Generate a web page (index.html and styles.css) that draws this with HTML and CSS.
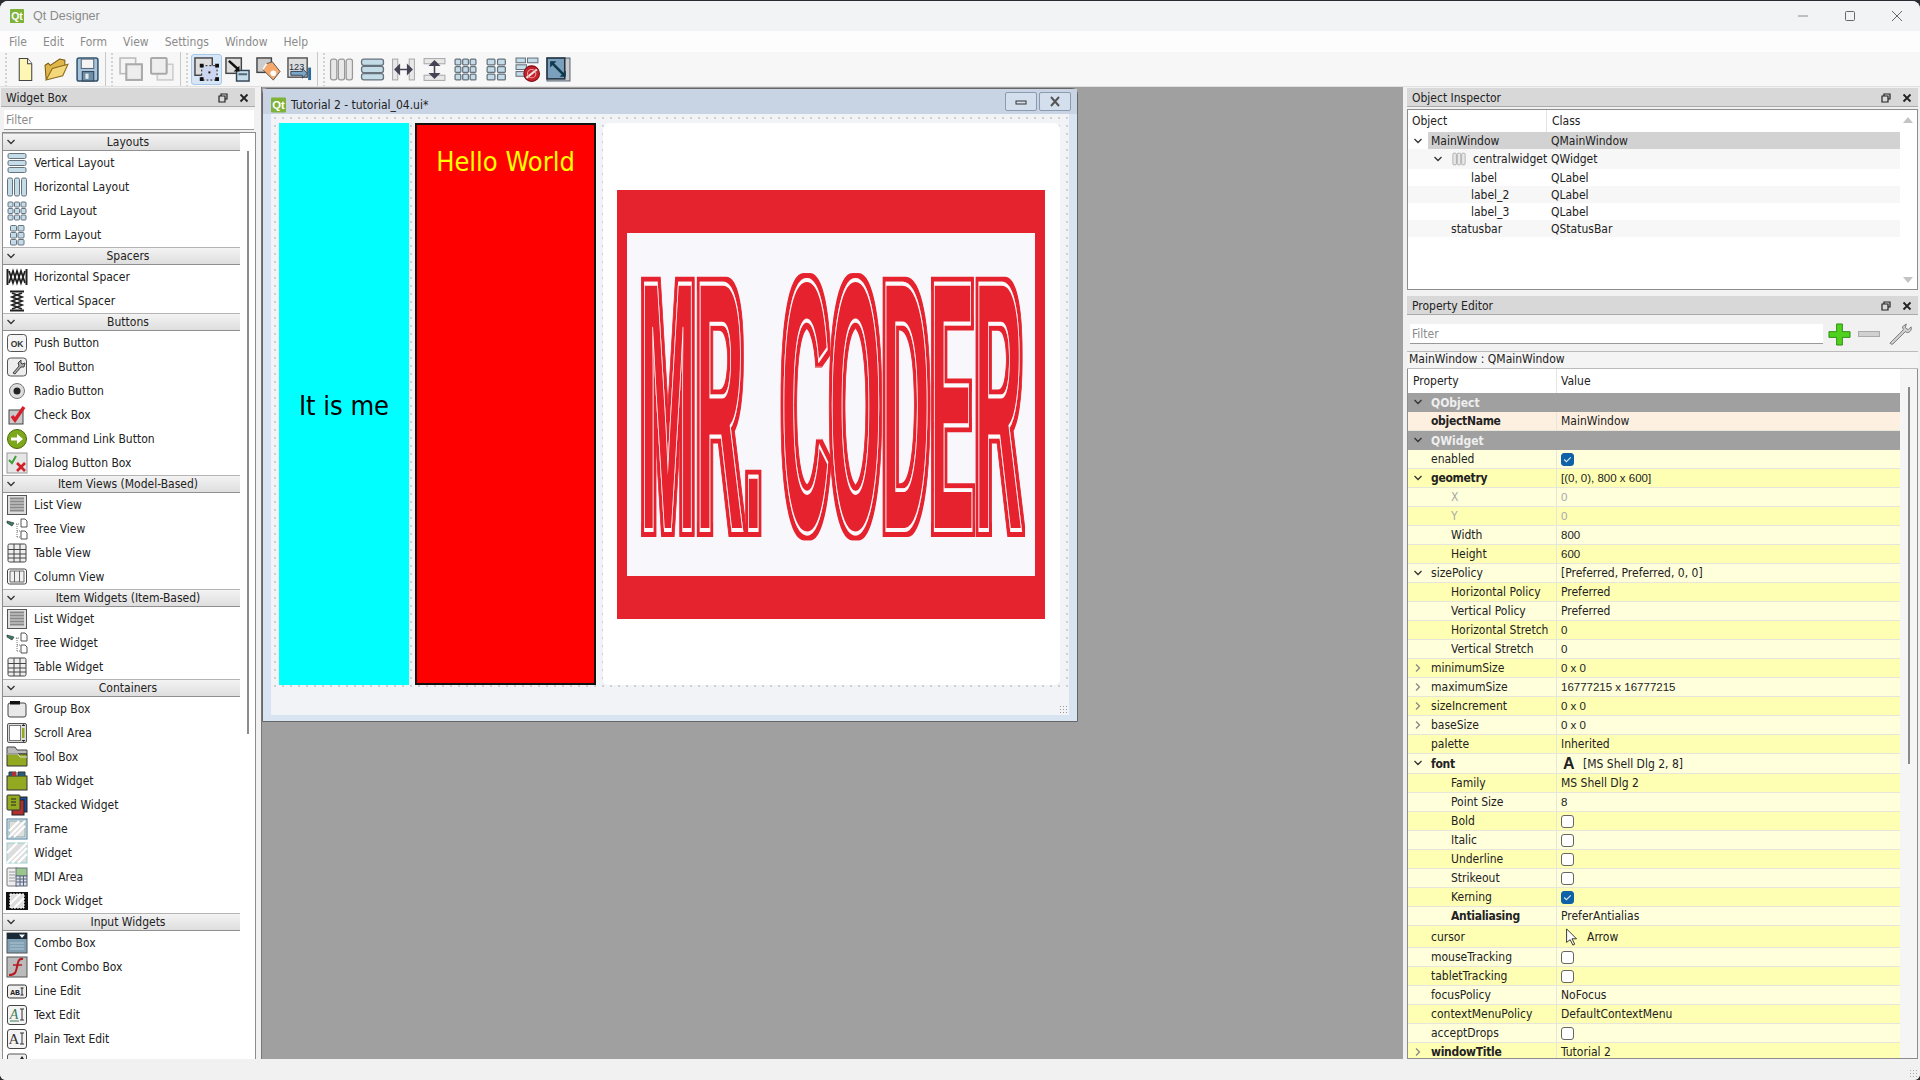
FILE: index.html
```html
<!DOCTYPE html>
<html lang="en">
<head>
  <meta charset="UTF-8" />
  <title>Qt Designer</title>
  <link rel="stylesheet" href="styles.css">
</head>
<body>
  <!-- icon sprite -->
  <svg class="sprite" xmlns="http://www.w3.org/2000/svg">
    <symbol id="i-qt" viewBox="0 0 16 16"><rect width="16" height="16" rx="1" fill="#7fb239"/><text x="8" y="12.5" font-size="12" font-weight="700" text-anchor="middle" fill="#fff" font-family="Liberation Sans">Qt</text></symbol>
    <symbol id="i-vlayout" viewBox="0 0 22 22"><g fill="#c4dbe8" stroke="#66727c"><rect x="2" y="1.5" width="18" height="5" rx="1.5"/><rect x="2" y="8.5" width="18" height="5" rx="1.5"/><rect x="2" y="15.5" width="18" height="5" rx="1.5"/></g></symbol>
    <symbol id="i-hlayout" viewBox="0 0 22 22"><g fill="#c4dbe8" stroke="#66727c"><rect x="1.5" y="2" width="5" height="18" rx="1.5"/><rect x="8.5" y="2" width="5" height="18" rx="1.5"/><rect x="15.5" y="2" width="5" height="18" rx="1.5"/></g></symbol>
    <symbol id="i-grid" viewBox="0 0 22 22"><g fill="#c4dbe8" stroke="#66727c"><rect x="2" y="2" width="5" height="5" rx="1"/><rect x="8.5" y="2" width="5" height="5" rx="1"/><rect x="15" y="2" width="5" height="5" rx="1"/><rect x="2" y="8.5" width="5" height="5" rx="1"/><rect x="8.5" y="8.5" width="5" height="5" rx="1"/><rect x="15" y="8.5" width="5" height="5" rx="1"/><rect x="2" y="15" width="5" height="5" rx="1"/><rect x="8.5" y="15" width="5" height="5" rx="1"/><rect x="15" y="15" width="5" height="5" rx="1"/></g></symbol>
    <symbol id="i-form" viewBox="0 0 22 22"><g fill="#c4dbe8" stroke="#66727c"><rect x="4.5" y="1.5" width="6" height="5.5" rx="1"/><rect x="12" y="1.5" width="6" height="5.5" rx="1"/><rect x="4.5" y="8.5" width="6" height="5.5" rx="1"/><rect x="12" y="8.5" width="6" height="5.5" rx="1"/><rect x="4.5" y="15.5" width="6" height="5.5" rx="1"/><rect x="12" y="15.5" width="6" height="5.5" rx="1"/></g></symbol>
    <symbol id="i-hspacer" viewBox="0 0 22 22"><path d="M1.5 3v16M20.5 3v16" stroke="#222" stroke-width="2"/><path d="M3 5l4 12 4-12 4 12 4-12M3 17l4-12 4 12 4-12 4 12" fill="none" stroke="#222" stroke-width="1.8"/></symbol>
    <symbol id="i-vspacer" viewBox="0 0 22 22"><path d="M4 1.5h14M4 20.5h14" stroke="#222" stroke-width="2"/><path d="M6 3l10 4-10 4 10 4-10 4M16 3L6 7l10 4-10 4 10 4" fill="none" stroke="#222" stroke-width="1.8"/></symbol>
    <symbol id="i-push" viewBox="0 0 22 22"><rect x="1.5" y="2.5" width="19" height="17" rx="3" fill="#f4f4f4" stroke="#555"/><text x="11" y="14.5" font-size="8.5" font-weight="700" text-anchor="middle" fill="#333" font-family="Liberation Sans">OK</text></symbol>
    <symbol id="i-tool" viewBox="0 0 22 22"><rect x="1.5" y="2" width="19" height="18" rx="3" fill="#eee" stroke="#555"/><path d="M15 4l-3 3 1 3-6 7 2 1 6-7 3 0 1-4-3 1-1-1z" fill="#aaa" stroke="#444"/></symbol>
    <symbol id="i-radio" viewBox="0 0 22 22"><circle cx="11" cy="11" r="7.5" fill="#ddd" stroke="#777"/><circle cx="11" cy="11" r="3.5" fill="#222"/></symbol>
    <symbol id="i-check" viewBox="0 0 22 22"><rect x="3" y="6" width="14" height="14" fill="#c9c9c9" stroke="#444"/><path d="M6 12l3 4 9-13" fill="none" stroke="#d81e2b" stroke-width="3.4"/></symbol>
    <symbol id="i-cmd" viewBox="0 0 22 22"><circle cx="11" cy="11" r="9.5" fill="#7da81c" stroke="#4c6a0c"/><path d="M5 9.5h6V6l6 5-6 5v-3.5H5z" fill="#fff"/></symbol>
    <symbol id="i-dialog" viewBox="0 0 22 22"><rect x="1" y="1" width="20" height="20" fill="#e6e6e6" stroke="#999"/><path d="M3 8l3 3 4-7" fill="none" stroke="#3f9f3a" stroke-width="2"/><path d="M11 11l8 8M19 11l-8 8" stroke="#d0202a" stroke-width="2.6"/></symbol>
    <symbol id="i-list" viewBox="0 0 22 22"><rect x="1.5" y="1.5" width="19" height="19" fill="#ddd" stroke="#555"/><path d="M4 4.5h14M4 7.500h14M4 10.500h14M4 13.500h14M4 16.500h14" stroke="#888" stroke-width="1.8"/></symbol>
    <symbol id="i-tree" viewBox="0 0 22 22"><path d="M1 3l7 2-2 3-5-3z" fill="#3a7f6a" stroke="#222" stroke-width=".6"/><path d="M10 6h3M11 6v13M11 13h3M11 19h3" stroke="#777" stroke-dasharray="1 1" fill="none"/><path d="M15 1h4l2 2v6h-6zM15 13h4l2 2v6h-6z" fill="#fff" stroke="#555"/></symbol>
    <symbol id="i-table" viewBox="0 0 22 22"><rect x="2" y="2" width="18" height="18" rx="1.500" fill="#eee" stroke="#444"/><path d="M2 7.500h18M2 12h18M2 16h18M8 2v18M14 2v18" stroke="#444"/></symbol>
    <symbol id="i-column" viewBox="0 0 22 22"><rect x="1.500" y="3" width="19" height="15" rx="2" fill="#fff" stroke="#444"/><path d="M4 5h14v11H4zM8.500 5v11M13.500 5v11" fill="#f0f0f0" stroke="#666"/></symbol>
    <symbol id="i-group" viewBox="0 0 22 22"><rect x="2" y="5" width="18" height="14" rx="2" fill="#e8e8e8" stroke="#444"/><rect x="4" y="3" width="10" height="3.500" fill="#111"/></symbol>
    <symbol id="i-scroll" viewBox="0 0 22 22"><rect x="1.500" y="1.500" width="19" height="19" rx="1.500" fill="#ddd" stroke="#555"/><rect x="3.500" y="3.500" width="11" height="15" fill="#fff" stroke="#777"/><rect x="16" y="6" width="2.500" height="10" fill="#93a922"/><path d="M15.500 4h4l-2-2zM15.500 18h4l-2 2z" fill="#222"/></symbol>
    <symbol id="i-toolbox" viewBox="0 0 22 22"><path d="M1 1h8l2 3h10v4H1z" fill="#bbb" stroke="#444"/><path d="M1 8h20v12H1z" fill="#93a922" stroke="#333"/><path d="M1 8h11l2 3h7" fill="none" stroke="#ddd"/></symbol>
    <symbol id="i-tab" viewBox="0 0 22 22"><rect x="1" y="6" width="20" height="14" fill="#93a922" stroke="#333"/><path d="M3 6V2h7v4M12 6V2h7v4" fill="#2a5b7a" stroke="#333"/><path d="M6 2h4v4H6z" fill="#b03030"/></symbol>
    <symbol id="i-stacked" viewBox="0 0 22 22"><rect x="10" y="3" width="11" height="15" fill="#1c4c9c" stroke="#222"/><rect x="6" y="6" width="12" height="15" fill="#b03030" stroke="#222"/><rect x="1" y="1" width="13" height="15" rx="1" fill="#93a922" stroke="#333"/><path d="M5 5h5M5 8h5M5 11h5" stroke="#222"/></symbol>
    <symbol id="i-frame" viewBox="0 0 22 22"><rect x="1" y="1" width="20" height="20" fill="#e8eef2" stroke="#4a7a9c"/><rect x="3" y="3" width="16" height="16" fill="#ddd" stroke="#8aa"/><path d="M3 13l10-10M8 19L19 8M3 19L19 3" stroke="#fff" stroke-width="2"/></symbol>
    <symbol id="i-widget" viewBox="0 0 22 22"><rect x="1" y="1" width="20" height="20" fill="#ddd" stroke="#9cc"/><path d="M1 11L11 1M6 21L21 6M12 21l9-9M1 21L21 1" stroke="#fff" stroke-width="2.200"/></symbol>
    <symbol id="i-mdi" viewBox="0 0 22 22"><rect x="1" y="2" width="11" height="18" rx="1" fill="#eee" stroke="#777"/><path d="M3 6h6M3 9h6M3 12h6M3 15h6" stroke="#999"/><rect x="10" y="2" width="11" height="8" fill="#9cc58c" stroke="#678"/><rect x="10" y="10" width="11" height="10" fill="#dde" stroke="#567"/><path d="M10 13h11M10 16h11M14 10v10M17.500 10v10" stroke="#567"/></symbol>
    <symbol id="i-dock" viewBox="0 0 22 22"><rect x="0" y="2" width="22" height="18" fill="#111"/><rect x="4" y="4" width="14" height="14" fill="#ddd" stroke="#fff" stroke-dasharray="2 1"/><path d="M4 14L14 4M8 18L18 8" stroke="#fff" stroke-width="1.800"/></symbol>
    <symbol id="i-combo" viewBox="0 0 22 22"><rect x="1" y="1" width="20" height="20" fill="#7f9fb5" stroke="#555"/><rect x="1" y="1" width="20" height="6" fill="#1a2a36"/><path d="M13 2.500h6l-3 3.500z" fill="#fff"/><path d="M4 11h14M4 14h14M4 17h14" stroke="#b6c6d0"/></symbol>
    <symbol id="i-fontcombo" viewBox="0 0 22 22"><rect x="1" y="1" width="20" height="20" fill="#bbb" stroke="#555"/><path d="M17 3c-5-1-5 4-6 8s-1 8-8 8" fill="none" stroke="#b81820" stroke-width="2"/><path d="M7 9h9" stroke="#b81820" stroke-width="1.500"/></symbol>
    <symbol id="i-line" viewBox="0 0 22 22"><rect x="1.500" y="5" width="19" height="13" rx="2" fill="#eee" stroke="#333"/><text x="9" y="14.500" font-size="8" font-weight="700" text-anchor="middle" fill="#222" font-family="Liberation Mono">AB</text><path d="M16 8v7M14.500 8h3M14.500 15h3" stroke="#222"/></symbol>
    <symbol id="i-text" viewBox="0 0 22 22"><rect x="1.500" y="1.500" width="19" height="19" rx="2.500" fill="#f3f3f3" stroke="#444"/><text x="8" y="15" font-size="14" font-style="italic" text-anchor="middle" fill="#3d7a5a" font-family="Liberation Serif">A</text><path d="M16 5v11M14 5h4M14 16h4" stroke="#333"/><path d="M4 17h9" stroke="#3d7a5a"/></symbol>
    <symbol id="i-plain" viewBox="0 0 22 22"><rect x="1.500" y="1.500" width="19" height="19" rx="2.500" fill="#f3f3f3" stroke="#444"/><text x="8" y="16" font-size="15" text-anchor="middle" fill="#333" font-family="Liberation Serif">A</text><path d="M16 5v11M14 5h4M14 16h4" stroke="#333"/></symbol>
    <symbol id="i-spin" viewBox="0 0 22 22"><rect x="1.500" y="2" width="19" height="18" rx="2" fill="#eee" stroke="#555"/><path d="M14 7h4l-2-3z" fill="#222"/></symbol>

    <symbol id="t-new" viewBox="0 0 24 24"><path d="M6 1.500h8l4 5v16H6z" fill="#fdf6b4" stroke="#444"/><path d="M14 1.500v5h4" fill="#fff" stroke="#444"/></symbol>
    <symbol id="t-open" viewBox="0 0 24 24"><path d="M2 21L1 8l3-2 2 2 9-6 5 1v8z" fill="#e0b54a" stroke="#7a5a10"/><path d="M2 22l6-11 15-4-5 11z" fill="#f4d77a" stroke="#8a6a1a"/></symbol>
    <symbol id="t-save" viewBox="0 0 24 24"><rect x="2" y="1" width="20" height="22" rx="2" fill="#a7c4dc" stroke="#33566f" stroke-width="1.500"/><rect x="6" y="2" width="12" height="9" fill="#f4f4f4" stroke="#567"/><rect x="7" y="14" width="11" height="9" fill="#6c8ea8" stroke="#345"/><rect x="10" y="16" width="3" height="5" fill="#e8e8e8"/></symbol>
    <symbol id="t-front" viewBox="0 0 24 24"><rect x="1" y="1" width="15" height="15" fill="#f4f4f4" stroke="#bbb" stroke-width="1.500"/><rect x="7" y="7" width="15" height="15" fill="#eee" stroke="#aaa" stroke-width="2"/></symbol>
    <symbol id="t-back" viewBox="0 0 24 24"><rect x="7" y="7" width="15" height="15" fill="#f2f2f2" stroke="#ccc" stroke-width="1.500"/><rect x="1" y="1" width="15" height="15" rx="1" fill="#eee" stroke="#aaa" stroke-width="2"/></symbol>
    <symbol id="t-widgets" viewBox="0 0 26 26"><rect x="1" y="1" width="18" height="18" fill="#ddd" stroke="#444" stroke-width="1.500"/><rect x="8" y="9" width="16" height="15" fill="#ccd6f0" stroke="#222" stroke-dasharray="2 2"/><path d="M6 7h4v4H6zM22 7h4v4h-4zM6 21h4v4H6zM22 21h4v4h-4z" fill="#111"/><rect x="15" y="15" width="2" height="2" fill="#111"/></symbol>
    <symbol id="t-signals" viewBox="0 0 26 26"><rect x="1" y="1" width="16" height="16" fill="#ddd" stroke="#444" stroke-width="1.500"/><rect x="12" y="14" width="13" height="11" fill="#c5dcea" stroke="#345" stroke-width="1.500"/><path d="M4 4l10 9" stroke="#111" stroke-width="2.500"/><path d="M15 9v6h-6z" fill="#111"/><path d="M14 18h9" stroke="#567" stroke-width="2"/></symbol>
    <symbol id="t-buddy" viewBox="0 0 26 26"><rect x="1" y="1" width="15" height="15" fill="#ccc" stroke="#444" stroke-width="1.500"/><path d="M11 7l6-2 8 10-7 9-11-11z" fill="#f6a86a" stroke="#555"/><path d="M11 7L7 13" stroke="#fff" stroke-width="1.500"/><circle cx="18" cy="17" r="3" fill="#fff"/></symbol>
    <symbol id="t-order" viewBox="0 0 26 26"><rect x="1" y="1" width="20" height="20" fill="#ddd" stroke="#555" stroke-width="1.500"/><text x="10" y="14" font-size="9.500" text-anchor="middle" fill="#234" font-family="Liberation Sans">123</text><path d="M4 15h12v-3l5 5-5 5v-3H4z" fill="#7aa6c8" stroke="#345"/><rect x="22" y="11" width="3" height="13" fill="#2c6a9c"/></symbol>
    <symbol id="t-hbar" viewBox="0 0 24 24"><g fill="#e8e8e8" stroke="#999" stroke-width="1.200"><rect x="1.500" y="2" width="6" height="20" rx="2"/><rect x="9" y="2" width="6" height="20" rx="2"/><rect x="16.500" y="2" width="6" height="20" rx="2"/></g></symbol>
    <symbol id="t-vbar" viewBox="0 0 24 24"><g fill="#c4dbe8" stroke="#66727c" stroke-width="1.300"><rect x="1.500" y="2" width="21" height="6" rx="2"/><rect x="1.500" y="9" width="21" height="6" rx="2"/><rect x="1.500" y="16" width="21" height="6" rx="2"/></g></symbol>
    <symbol id="t-hsplit" viewBox="0 0 24 24"><g fill="#e8e8e8" stroke="#aaa"><rect x="1.500" y="2" width="5" height="20"/><rect x="17.500" y="2" width="5" height="20"/></g><path d="M5 12h14M8 8l-4 4 4 4zM16 8l4 4-4 4z" fill="#445" stroke="#445" stroke-width="1.500"/></symbol>
    <symbol id="t-vsplit" viewBox="0 0 24 24"><g fill="#e8e8e8" stroke="#aaa"><rect x="2" y="1.500" width="20" height="5"/><rect x="2" y="17.500" width="20" height="5"/></g><path d="M12 5v14M8 8l4-4 4 4zM8 16l4 4 4-4z" fill="#445" stroke="#445" stroke-width="1.500"/></symbol>
    <symbol id="t-grid" viewBox="0 0 24 24"><g fill="#c4dbe8" stroke="#66727c" stroke-width="1.200"><rect x="2" y="2" width="5.500" height="5.500" rx="1"/><rect x="9.300" y="2" width="5.500" height="5.500" rx="1"/><rect x="16.500" y="2" width="5.500" height="5.500" rx="1"/><rect x="2" y="9.300" width="5.500" height="5.500" rx="1"/><rect x="9.300" y="9.300" width="5.500" height="5.500" rx="1"/><rect x="16.500" y="9.300" width="5.500" height="5.500" rx="1"/><rect x="2" y="16.500" width="5.500" height="5.500" rx="1"/><rect x="9.300" y="16.500" width="5.500" height="5.500" rx="1"/><rect x="16.500" y="16.500" width="5.500" height="5.500" rx="1"/></g></symbol>
    <symbol id="t-form" viewBox="0 0 24 24"><g fill="#c4dbe8" stroke="#66727c" stroke-width="1.200"><rect x="3" y="2" width="7.500" height="5.500" rx="1"/><rect x="13" y="2" width="7.500" height="5.500" rx="1"/><rect x="3" y="9.300" width="7.500" height="5.500" rx="1"/><rect x="13" y="9.300" width="7.500" height="5.500" rx="1"/><rect x="3" y="16.500" width="7.500" height="5.500" rx="1"/><rect x="13" y="16.500" width="7.500" height="5.500" rx="1"/></g></symbol>
    <symbol id="t-break" viewBox="0 0 24 24"><g fill="#c4dbe8" stroke="#66727c"><rect x="1" y="1" width="9" height="4.500"/><rect x="12" y="1" width="10" height="4.500"/><rect x="1" y="7.500" width="10" height="4.500"/><rect x="1" y="14" width="8" height="4.500"/></g><circle cx="16" cy="16" r="7.500" fill="#c8202c" stroke="#7a1016"/><path d="M11 20l10-8" stroke="#e8e8e8" stroke-width="2"/><circle cx="16" cy="16" r="4" fill="none" stroke="#e8a0a0"/></symbol>
    <symbol id="t-adjust" viewBox="0 0 24 24"><rect x="1" y="1" width="22" height="22" fill="#ccc" stroke="#567"/><rect x="1" y="1" width="17" height="20" fill="#7aa0be" stroke="#234" stroke-width="1.500"/><path d="M5 5l13 13" stroke="#103a4c" stroke-width="2.400"/><path d="M4 10V4h6zM19 13v6h-6z" fill="#103a4c"/></symbol>

    <symbol id="i-plus" viewBox="0 0 24 24"><path d="M9 1h6v8h8v6h-8v8H9v-8H1V9h8z" fill="#4fd11e" stroke="#2d8c12"/></symbol>
    <symbol id="i-wrench" viewBox="0 0 24 24"><path d="M2 22l-1-1L15 7l-1-3 4-3-1 4 3 2 3-3c1 3-1 6-4 6l-2-1L4 22z" fill="#d0d0d0" stroke="#777"/></symbol>
    <symbol id="i-cursor" viewBox="0 0 14 20"><path d="M1 1v15l4-3 3 6 2-1-3-6h5z" fill="#fff" stroke="#222"/></symbol>
    <symbol id="i-float" viewBox="0 0 10 10"><path d="M3 3V1h6v5H7M1 3h6v6H1z" fill="none" stroke="#222" stroke-width="1.200"/></symbol>
    <symbol id="i-close" viewBox="0 0 10 10"><path d="M1.500 1.500l7 7M8.500 1.500l-7 7" stroke="#222" stroke-width="1.800"/></symbol>
    <symbol id="i-down" viewBox="0 0 10 10"><path d="M1.500 3l3.500 3.500L8.500 3" fill="none" stroke="#333" stroke-width="1.300"/></symbol>
    <symbol id="i-right" viewBox="0 0 10 10"><path d="M3 1.500L6.500 5 3 8.500" fill="none" stroke="#888" stroke-width="1.300"/></symbol>
    <symbol id="i-tick" viewBox="0 0 10 10"><path d="M2 5l2 2 4-4" fill="none" stroke="#dbe8f4" stroke-width="1"/></symbol>
  </svg>

  <div class="app">
    <div class="titlebar">
      <svg class="app-icon"><use href="#i-qt"/></svg>
      <span class="app-title">Qt Designer</span>
      <div class="win-buttons">
        <svg viewBox="0 0 12 12"><path d="M1 6h10" stroke="#8a8a8a"/></svg>
        <svg viewBox="0 0 12 12"><rect x="1.500" y="1.500" width="9" height="9" rx="1" fill="none" stroke="#666"/></svg>
        <svg viewBox="0 0 12 12"><path d="M1 1l10 10M11 1L1 11" stroke="#666"/></svg>
      </div>
    </div>

    <div class="menubar">
      <span>File</span><span>Edit</span><span>Form</span><span>View</span><span>Settings</span><span>Window</span><span>Help</span>
    </div>

    <div class="toolbar">
      <div class="tool-group">
        <svg class="tool"><use href="#t-new"/></svg>
        <svg class="tool"><use href="#t-open"/></svg>
        <svg class="tool"><use href="#t-save"/></svg>
      </div>
      <div class="tool-group">
        <svg class="tool"><use href="#t-front"/></svg>
        <svg class="tool"><use href="#t-back"/></svg>
      </div>
      <div class="tool-group">
        <span class="tool-on"><svg class="tool"><use href="#t-widgets"/></svg></span>
        <svg class="tool"><use href="#t-signals"/></svg>
        <svg class="tool"><use href="#t-buddy"/></svg>
        <svg class="tool"><use href="#t-order"/></svg>
      </div>
      <div class="tool-group last">
        <svg class="tool"><use href="#t-hbar"/></svg>
        <svg class="tool"><use href="#t-vbar"/></svg>
        <svg class="tool"><use href="#t-hsplit"/></svg>
        <svg class="tool"><use href="#t-vsplit"/></svg>
        <svg class="tool"><use href="#t-grid"/></svg>
        <svg class="tool"><use href="#t-form"/></svg>
        <svg class="tool"><use href="#t-break"/></svg>
        <svg class="tool"><use href="#t-adjust"/></svg>
      </div>
    </div>

    <div class="workspace">
      <!-- Widget Box -->
      <div class="dock left-dock">
        <div class="dock-head">
          <span>Widget Box</span>
          <svg class="dock-btn"><use href="#i-float"/></svg>
          <svg class="dock-btn"><use href="#i-close"/></svg>
        </div>
        <div class="filter box-filter">Filter</div>
        <div class="widget-list">
          <div class="widget-scroll"></div>
          <div class="section"><svg class="arrow"><use href="#i-down"/></svg><span>Layouts</span></div>
          <div class="item"><svg><use href="#i-vlayout"/></svg>Vertical Layout</div>
          <div class="item"><svg><use href="#i-hlayout"/></svg>Horizontal Layout</div>
          <div class="item"><svg><use href="#i-grid"/></svg>Grid Layout</div>
          <div class="item"><svg><use href="#i-form"/></svg>Form Layout</div>
          <div class="section"><svg class="arrow"><use href="#i-down"/></svg><span>Spacers</span></div>
          <div class="item"><svg><use href="#i-hspacer"/></svg>Horizontal Spacer</div>
          <div class="item"><svg><use href="#i-vspacer"/></svg>Vertical Spacer</div>
          <div class="section"><svg class="arrow"><use href="#i-down"/></svg><span>Buttons</span></div>
          <div class="item"><svg><use href="#i-push"/></svg>Push Button</div>
          <div class="item"><svg><use href="#i-tool"/></svg>Tool Button</div>
          <div class="item"><svg><use href="#i-radio"/></svg>Radio Button</div>
          <div class="item"><svg><use href="#i-check"/></svg>Check Box</div>
          <div class="item"><svg><use href="#i-cmd"/></svg>Command Link Button</div>
          <div class="item"><svg><use href="#i-dialog"/></svg>Dialog Button Box</div>
          <div class="section"><svg class="arrow"><use href="#i-down"/></svg><span>Item Views (Model-Based)</span></div>
          <div class="item"><svg><use href="#i-list"/></svg>List View</div>
          <div class="item"><svg><use href="#i-tree"/></svg>Tree View</div>
          <div class="item"><svg><use href="#i-table"/></svg>Table View</div>
          <div class="item"><svg><use href="#i-column"/></svg>Column View</div>
          <div class="section"><svg class="arrow"><use href="#i-down"/></svg><span>Item Widgets (Item-Based)</span></div>
          <div class="item"><svg><use href="#i-list"/></svg>List Widget</div>
          <div class="item"><svg><use href="#i-tree"/></svg>Tree Widget</div>
          <div class="item"><svg><use href="#i-table"/></svg>Table Widget</div>
          <div class="section"><svg class="arrow"><use href="#i-down"/></svg><span>Containers</span></div>
          <div class="item"><svg><use href="#i-group"/></svg>Group Box</div>
          <div class="item"><svg><use href="#i-scroll"/></svg>Scroll Area</div>
          <div class="item"><svg><use href="#i-toolbox"/></svg>Tool Box</div>
          <div class="item"><svg><use href="#i-tab"/></svg>Tab Widget</div>
          <div class="item"><svg><use href="#i-stacked"/></svg>Stacked Widget</div>
          <div class="item"><svg><use href="#i-frame"/></svg>Frame</div>
          <div class="item"><svg><use href="#i-widget"/></svg>Widget</div>
          <div class="item"><svg><use href="#i-mdi"/></svg>MDI Area</div>
          <div class="item"><svg><use href="#i-dock"/></svg>Dock Widget</div>
          <div class="section"><svg class="arrow"><use href="#i-down"/></svg><span>Input Widgets</span></div>
          <div class="item"><svg><use href="#i-combo"/></svg>Combo Box</div>
          <div class="item"><svg><use href="#i-fontcombo"/></svg>Font Combo Box</div>
          <div class="item"><svg><use href="#i-line"/></svg>Line Edit</div>
          <div class="item"><svg><use href="#i-text"/></svg>Text Edit</div>
          <div class="item"><svg><use href="#i-plain"/></svg>Plain Text Edit</div>
          <div class="item"><svg><use href="#i-spin"/></svg></div>
        </div>
      </div>

      <!-- MDI area with the form -->
      <div class="mdi">
        <div class="subwindow">
          <div class="sub-title">
            <svg class="sub-icon"><use href="#i-qt"/></svg>
            <span class="sub-name">Tutorial 2 - tutorial_04.ui*</span>
            <div class="sub-btn"><svg viewBox="0 0 12 12"><rect x="1" y="5" width="10" height="3" fill="none" stroke="#333"/></svg></div>
            <div class="sub-btn"><svg viewBox="0 0 12 12"><path d="M2 1l8 9M10 1l-8 9" stroke="#555" stroke-width="2"/></svg></div>
          </div>
          <div class="form">
            <div class="form-row">
              <div class="label-cyan">It is me</div>
              <div class="label-red">Hello World</div>
              <div class="label-image">
                <div class="logo">
                  <svg class="logo-text" viewBox="0 0 388 268">
                    <filter id="logo-fat" x="-5%" y="-5%" width="110%" height="110%">
                      <feMorphology in="SourceAlpha" operator="dilate" radius="3 5" result="fat"/>
                      <feFlood flood-color="#e5232e"/>
                      <feComposite in2="fat" operator="in"/>
                      <feMerge><feMergeNode/><feMergeNode in="SourceGraphic"/></feMerge>
                    </filter>
                    <g filter="url(#logo-fat)">
                      <text class="logo-word" transform="translate(3 260) scale(.669 3.58)">MR. CODER</text>
                    </g>
                  </svg>
                </div>
              </div>
            </div>
            <div class="form-grip"></div>
          </div>
        </div>
      </div>

      <!-- Object Inspector + Property Editor -->
      <div class="dock right-dock">
        <div class="dock-head">
          <span>Object Inspector</span>
          <svg class="dock-btn"><use href="#i-float"/></svg>
          <svg class="dock-btn"><use href="#i-close"/></svg>
        </div>
        <div class="inspector">
          <div class="obj-main">
            <div class="obj-head"><span class="col-obj">Object</span><span>Class</span></div>
            <div class="obj-row selected" ><svg class="tree-arrow a0"><use href="#i-down"/></svg><span class="col-obj t1">MainWindow</span><span>QMainWindow</span></div>
            <div class="obj-row alt tall"><svg class="tree-arrow a1"><use href="#i-down"/></svg><svg class="obj-icon"><use href="#t-hbar"/></svg><span class="col-obj t2">centralwidget</span><span>QWidget</span></div>
            <div class="obj-row"><span class="col-obj t3">label</span><span>QLabel</span></div>
            <div class="obj-row alt"><span class="col-obj t3">label_2</span><span>QLabel</span></div>
            <div class="obj-row"><span class="col-obj t3">label_3</span><span>QLabel</span></div>
            <div class="obj-row alt"><span class="col-obj t4">statusbar</span><span>QStatusBar</span></div>
          </div>
          <div class="obj-scroll"><span class="tri-up"></span><span class="tri-down"></span></div>
        </div>

        <div class="dock-head second">
          <span>Property Editor</span>
          <svg class="dock-btn"><use href="#i-float"/></svg>
          <svg class="dock-btn"><use href="#i-close"/></svg>
        </div>
        <div class="prop-tools">
          <div class="filter">Filter</div>
          <svg class="prop-tool"><use href="#i-plus"/></svg>
          <div class="minus-tool"></div>
          <svg class="prop-tool"><use href="#i-wrench"/></svg>
        </div>
        <div class="prop-class">MainWindow : QMainWindow</div>
        <div class="prop-box">
          <div class="prop-main">
            <div class="prop-head"><span class="prop-name">Property</span><span class="prop-value">Value</span></div>
            <div class="props">
              <div class="prop group"><span class="prop-name"><svg class="arrow"><use href="#i-down"/></svg>QObject</span></div>
              <div class="prop peach"><span class="prop-name"><b>objectName</b></span><span class="prop-value">MainWindow</span></div>
              <div class="prop group"><span class="prop-name"><svg class="arrow"><use href="#i-down"/></svg>QWidget</span></div>
              <div class="prop"><span class="prop-name">enabled</span><span class="prop-value"><span class="check on"><svg><use href="#i-tick"/></svg></span></span></div>
              <div class="prop"><span class="prop-name"><svg class="arrow"><use href="#i-down"/></svg><b>geometry</b></span><span class="prop-value num">[(0, 0), 800 x 600]</span></div>
              <div class="prop off"><span class="prop-name sub">X</span><span class="prop-value num">0</span></div>
              <div class="prop off"><span class="prop-name sub">Y</span><span class="prop-value num">0</span></div>
              <div class="prop"><span class="prop-name sub">Width</span><span class="prop-value num">800</span></div>
              <div class="prop"><span class="prop-name sub">Height</span><span class="prop-value num">600</span></div>
              <div class="prop"><span class="prop-name"><svg class="arrow"><use href="#i-down"/></svg>sizePolicy</span><span class="prop-value">[Preferred, Preferred, 0, 0]</span></div>
              <div class="prop"><span class="prop-name sub">Horizontal Policy</span><span class="prop-value">Preferred</span></div>
              <div class="prop"><span class="prop-name sub">Vertical Policy</span><span class="prop-value">Preferred</span></div>
              <div class="prop"><span class="prop-name sub">Horizontal Stretch</span><span class="prop-value num">0</span></div>
              <div class="prop"><span class="prop-name sub">Vertical Stretch</span><span class="prop-value num">0</span></div>
              <div class="prop"><span class="prop-name"><svg class="arrow"><use href="#i-right"/></svg>minimumSize</span><span class="prop-value num">0 x 0</span></div>
              <div class="prop"><span class="prop-name"><svg class="arrow"><use href="#i-right"/></svg>maximumSize</span><span class="prop-value num">16777215 x 16777215</span></div>
              <div class="prop"><span class="prop-name"><svg class="arrow"><use href="#i-right"/></svg>sizeIncrement</span><span class="prop-value num">0 x 0</span></div>
              <div class="prop"><span class="prop-name"><svg class="arrow"><use href="#i-right"/></svg>baseSize</span><span class="prop-value num">0 x 0</span></div>
              <div class="prop"><span class="prop-name">palette</span><span class="prop-value">Inherited</span></div>
              <div class="prop mid"><span class="prop-name"><svg class="arrow"><use href="#i-down"/></svg><b>font</b></span><span class="prop-value"><span class="font-a">A</span>[MS Shell Dlg 2, 8]</span></div>
              <div class="prop"><span class="prop-name sub">Family</span><span class="prop-value">MS Shell Dlg 2</span></div>
              <div class="prop"><span class="prop-name sub">Point Size</span><span class="prop-value num">8</span></div>
              <div class="prop"><span class="prop-name sub">Bold</span><span class="prop-value"><span class="check"></span></span></div>
              <div class="prop"><span class="prop-name sub">Italic</span><span class="prop-value"><span class="check"></span></span></div>
              <div class="prop"><span class="prop-name sub">Underline</span><span class="prop-value"><span class="check"></span></span></div>
              <div class="prop"><span class="prop-name sub">Strikeout</span><span class="prop-value"><span class="check"></span></span></div>
              <div class="prop"><span class="prop-name sub">Kerning</span><span class="prop-value"><span class="check on"><svg><use href="#i-tick"/></svg></span></span></div>
              <div class="prop"><span class="prop-name sub"><b>Antialiasing</b></span><span class="prop-value">PreferAntialias</span></div>
              <div class="prop big"><span class="prop-name">cursor</span><span class="prop-value"><svg class="cursor-icon"><use href="#i-cursor"/></svg>Arrow</span></div>
              <div class="prop"><span class="prop-name">mouseTracking</span><span class="prop-value"><span class="check"></span></span></div>
              <div class="prop"><span class="prop-name">tabletTracking</span><span class="prop-value"><span class="check"></span></span></div>
              <div class="prop"><span class="prop-name">focusPolicy</span><span class="prop-value">NoFocus</span></div>
              <div class="prop"><span class="prop-name">contextMenuPolicy</span><span class="prop-value">DefaultContextMenu</span></div>
              <div class="prop"><span class="prop-name">acceptDrops</span><span class="prop-value"><span class="check"></span></span></div>
              <div class="prop"><span class="prop-name"><svg class="arrow"><use href="#i-right"/></svg><b>windowTitle</b></span><span class="prop-value">Tutorial 2</span></div>
            </div>
          </div>
          <div class="prop-scroll"><div class="prop-thumb"></div></div>
        </div>
      </div>
    </div>

    <div class="statusbar"><div class="status-grip"></div></div>
  </div>
</body>
</html>
```

FILE: styles.css
```css
* { box-sizing: border-box; }
html, body { margin: 0; height: 100%; }
body {
  background: #2b2b33;
  font-family: "DejaVu Sans Condensed", "Liberation Sans", sans-serif;
  font-size: 12px;
  color: #222;
  overflow: hidden;
}
.sprite { display: none; }
b { letter-spacing: -0.3px; }

.app {
  width: 1920px;
  height: 1079px;
  margin-top: 1px;
  background: #f1f1f1;
  border-radius: 8px 8px 6px 6px;
  overflow: hidden;
  display: flex;
  flex-direction: column;
}

/* title + menu */
.titlebar {
  height: 30px;
  flex: none;
  display: flex;
  align-items: center;
  background: #f2f3f5;
  padding-left: 10px;
}
.app-icon { width: 14px; height: 14px; margin-right: 9px; }
.app-title { color: #8a8a8a; font: 12.5px "Liberation Sans", sans-serif; }
.win-buttons { margin-left: auto; display: flex; gap: 35px; padding-right: 17px; }
.win-buttons svg { width: 12px; height: 12px; }

.menubar {
  height: 21px;
  flex: none;
  display: flex;
  align-items: center;
  gap: 16px;
  padding-left: 9px;
  background: #fdfdfd;
  color: #8b8b8b;
}

.toolbar {
  height: 35px;
  flex: none;
  display: flex;
  background: #f7f7f7;
  border-bottom: 1px solid #e0e0e0;
}
.tool-group {
  display: flex;
  align-items: center;
  gap: 6px;
  padding: 0 5px 0 13px;
  border-right: 1px solid #c8c8c8;
  background-image: radial-gradient(#a8a8a8 0.6px, transparent 0.8px);
  background-size: 4px 4px;
  background-repeat: repeat-y;
  background-position: 4px 0;
}
.tool-group.last { border-right: none; padding-left: 11px; }
.tool { width: 25px; height: 25px; flex: none; }
.tool-on {
  display: flex;
  padding: 2px;
  margin: 0 -3px;
  background: #d6e6f6;
  border: 1px solid #a8c8e8;
  border-radius: 3px;
}

.workspace { flex: 1; min-height: 0; display: flex; }

/* docks */
.dock { display: flex; flex-direction: column; min-height: 0; }
.left-dock { width: 261px; flex: none; padding-left: 2px; }
.right-dock { width: 517px; flex: none; padding: 0 2px 0 4px; }
.dock-head {
  height: 19px;
  flex: none;
  margin-top: 1px;
  display: flex;
  align-items: center;
  padding: 1px 6px 0 5px;
  background: #d8d8d8;
  border-bottom: 1px solid #aaa;
  font-size: 12px;
}
.left-dock .dock-head { width: 254px; margin-left: -1px; }
.dock-head span { margin-right: auto; }
.dock-btn { width: 10px; height: 10px; margin-left: 11px; }
.dock-head.second { margin-top: 6px; }

.filter {
  height: 20px;
  display: flex;
  align-items: center;
  padding-left: 2px;
  background: #fff;
  border-bottom: 1px solid #999;
  color: #8a8a8a;
}
.box-filter { width: 250px; margin: 3px 0 2px 2px; flex: none; padding-top: 1px; }

.widget-list {
  width: 254px;
  flex: 1;
  min-height: 0;
  overflow: hidden;
  position: relative;
  background: #fff;
  border: 1px solid #8d8d8d;
  border-bottom: none;
}
.widget-scroll {
  position: absolute;
  left: 244px;
  top: 18px;
  width: 2px;
  height: 583px;
  background: #8c8c8c;
}
.section {
  width: 237px;
  height: 18px;
  display: flex;
  align-items: center;
  background: linear-gradient(#f3f3f3, #dedede);
  border-top: 1px solid #b4b4b4;
  border-bottom: 1px solid #909090;
}
.section span { flex: 1; text-align: center; }
.arrow { width: 10px; height: 10px; margin-left: 3px; flex: none; }
.item {
  height: 24px;
  display: flex;
  align-items: center;
  gap: 6px;
  padding-left: 3px;
  white-space: nowrap;
}
.item svg { width: 22px; height: 22px; flex: none; }

/* MDI */
.mdi {
  flex: 1;
  min-width: 0;
  background: #a0a0a0;
  border-left: 1px solid #777;
  overflow: hidden;
}
.subwindow {
  width: 816px;
  height: 634px;
  margin-top: 1px;
  background: #d8e4f2;
  border: 1px solid #666;
  border-radius: 6px 6px 0 0;
  display: flex;
  flex-direction: column;
}
.sub-title {
  height: 25px;
  flex: none;
  display: flex;
  align-items: center;
  padding: 0 6px 0 8px;
  background: #c8d4e4;
}
.sub-icon { width: 15px; height: 16px; margin: 7px 5px 0 0; }
.sub-name { margin: 7px auto 0 0; font-size: 12px; }
.sub-btn {
  width: 32px;
  height: 19px;
  margin-left: 2px;
  border: 1px solid #8a9ab0;
  border-radius: 2px;
  background: #d4dfee;
  display: flex;
  justify-content: center;
  align-items: center;
}
.sub-btn svg { width: 12px; height: 12px; }
.form {
  flex: 1;
  margin: 0 8px 6px;
  padding: 9px 8px 0 8px;
  background-color: #f2f3f7;
  background-image:
    linear-gradient(transparent 574px, #f2f3f7 574px),
    radial-gradient(#a4a4a4 0.6px, transparent 0.8px);
  background-size: 100% 100%, 8px 8px;
  position: relative;
}
.form-row { display: flex; height: 562px; }
.label-cyan {
  width: 130px;
  padding-top: 2px;
  background: #00ffff;
  display: flex;
  align-items: center;
  justify-content: center;
  font-size: 27px;
  color: #000;
}
.label-red {
  width: 181px;
  margin-left: 6px;
  background: #ff0000;
  border: 2px solid #111;
  padding-top: 21px;
  text-align: center;
  font-size: 27px;
  color: #ffff00;
}
.label-image {
  width: 457px;
  margin-left: 7px;
  padding-right: 1px;
  background: #fff;
  border-radius: 6px;
  display: flex;
  align-items: center;
  justify-content: center;
}
.logo {
  width: 428px;
  height: 429px;
  border: solid #e5232e;
  border-width: 43px 10px;
  background: #f8f8fc;
  display: flex;
  align-items: center;
  justify-content: center;
}
.logo-text { width: 388px; height: 268px; overflow: visible; }
.logo-word {
  font-family: "Liberation Sans", sans-serif;
  font-weight: 700;
  font-size: 100px;
  fill: #e5232e;
  stroke: #fbfbfd;
  stroke-width: 1.1px;
}
.form-grip {
  position: absolute;
  right: 1px;
  bottom: 1px;
  width: 9px;
  height: 9px;
  background-image: radial-gradient(#999 0.8px, transparent 1px);
  background-size: 3px 3px;
}

/* object inspector */
.inspector {
  height: 181px;
  flex: none;
  margin-top: 2px;
  display: flex;
  background: #fff;
  border: 1px solid #8d8d8d;
}
.obj-main { flex: 1; min-width: 0; }
.obj-scroll { width: 17px; flex: none; position: relative; }
.tri-up, .tri-down {
  position: absolute;
  left: 3px;
  width: 0;
  height: 0;
  border-left: 5px solid transparent;
  border-right: 5px solid transparent;
}
.tri-up { top: 7px; border-bottom: 6px solid #c4c4c4; }
.tri-down { bottom: 6px; border-top: 6px solid #c4c4c4; }
.obj-head {
  height: 22px;
  display: flex;
  align-items: center;
  padding-left: 4px;
}
.col-obj { width: 139px; flex: none; }
.obj-head .col-obj { border-right: 1px solid #e4e4e4; height: 22px; line-height: 22px; width: 135px; margin-right: 5px; }
.obj-row {
  height: 17px;
  display: flex;
  align-items: center;
  position: relative;
  padding-left: 143px;
  white-space: nowrap;
}
.obj-row.alt { background: #f7f7f7; }
.obj-row.tall { height: 20px; }
.obj-row.selected { background: linear-gradient(90deg, #fff 20px, #d2d2d2 20px); }
.obj-row .col-obj { position: absolute; left: 0; width: 140px; }
.t1 { padding-left: 23px; }
.t2 { padding-left: 65px; }
.t3 { padding-left: 63px; }
.t4 { padding-left: 43px; }
.tree-arrow { position: absolute; width: 10px; height: 10px; top: 4px; }
.a0 { left: 5px; }
.a1 { left: 25px; top: 5px; }
.obj-icon { position: absolute; left: 44px; top: 3px; width: 14px; height: 14px; }

/* property editor */
.prop-tools {
  height: 36px;
  flex: none;
  display: flex;
  align-items: center;
  padding-left: 3px;
  padding-top: 2px;
}
.prop-tools .filter { width: 413px; flex: none; }
.prop-tool { width: 23px; height: 23px; margin-left: 5px; }
.minus-tool { width: 22px; height: 6px; margin-left: 7px; background: #d0d0d0; border: 1px solid #aaa; }
.prop-tools .minus-tool + .prop-tool { margin-left: 9px; }
.prop-class {
  height: 18px;
  flex: none;
  line-height: 15px;
  padding-left: 2px;
  background: #f4f4f4;
  border-top: 1px solid #bbb;
  border-bottom: 1px solid #bbb;
  white-space: nowrap;
}
.prop-box {
  flex: 1;
  min-height: 0;
  display: flex;
  overflow: hidden;
  border: 1px solid #8d8d8d;
  border-top: none;
  background: #fff;
}
.prop-main { flex: 1; min-width: 0; }
.prop-scroll { width: 17px; flex: none; position: relative; background: #f5f5f5; }
.prop-thumb { position: absolute; left: 8px; top: 18px; width: 2px; height: 377px; background: #8a8a8a; }
.prop-head { height: 24px; display: flex; align-items: center; }
.prop-head .prop-name { line-height: 24px; padding-left: 5px; border-right: 1px solid #e4e4e4; height: 24px; }
.prop {
  height: 19px;
  display: flex;
  align-items: stretch;
  border-bottom: 1px solid #e6e6da;
  white-space: nowrap;
}
.prop:nth-child(even) { background: #ffffdc; }
.prop:nth-child(odd) { background: #ffffb4; }
.prop.mid { height: 20px; }
.prop.big { height: 22px; }
.prop.group { background: #a0a0a0; color: #eee; font-weight: 700; border-bottom: none; }
.prop.peach { background: #fef0e0; }
.prop.off { color: #a8a8a8; }
.prop-name {
  width: 149px;
  flex: none;
  display: flex;
  align-items: center;
  padding-left: 23px;
  position: relative;
  border-right: 1px solid #e6e6da;
}
.prop.group .prop-name { border-right: none; }
.prop-name.sub { padding-left: 43px; }
.prop-name .arrow { position: absolute; left: 5px; top: 4px; margin: 0; }
.prop-value { display: flex; align-items: center; padding-left: 4px; }
.prop-value.num { font: 11.5px "Liberation Sans", sans-serif; }
.check {
  width: 13px;
  height: 13px;
  display: block;
  background: #fff;
  border: 1px solid #666;
  border-radius: 3px;
}
.check.on { background: #0f62a8; border-color: #0f62a8; }
.check svg { display: block; width: 11px; height: 11px; }
.font-a { font: 700 16px "Liberation Sans", sans-serif; width: 22px; padding-left: 2px; }
.cursor-icon { width: 14px; height: 18px; margin: 0 8px 0 4px; }

.statusbar { height: 21px; flex: none; position: relative; background: #f1f1f1; }
.status-grip {
  position: absolute;
  right: 2px;
  bottom: 2px;
  width: 9px;
  height: 9px;
  background-image: radial-gradient(#aaa 0.8px, transparent 1px);
  background-size: 3px 3px;
}
```
